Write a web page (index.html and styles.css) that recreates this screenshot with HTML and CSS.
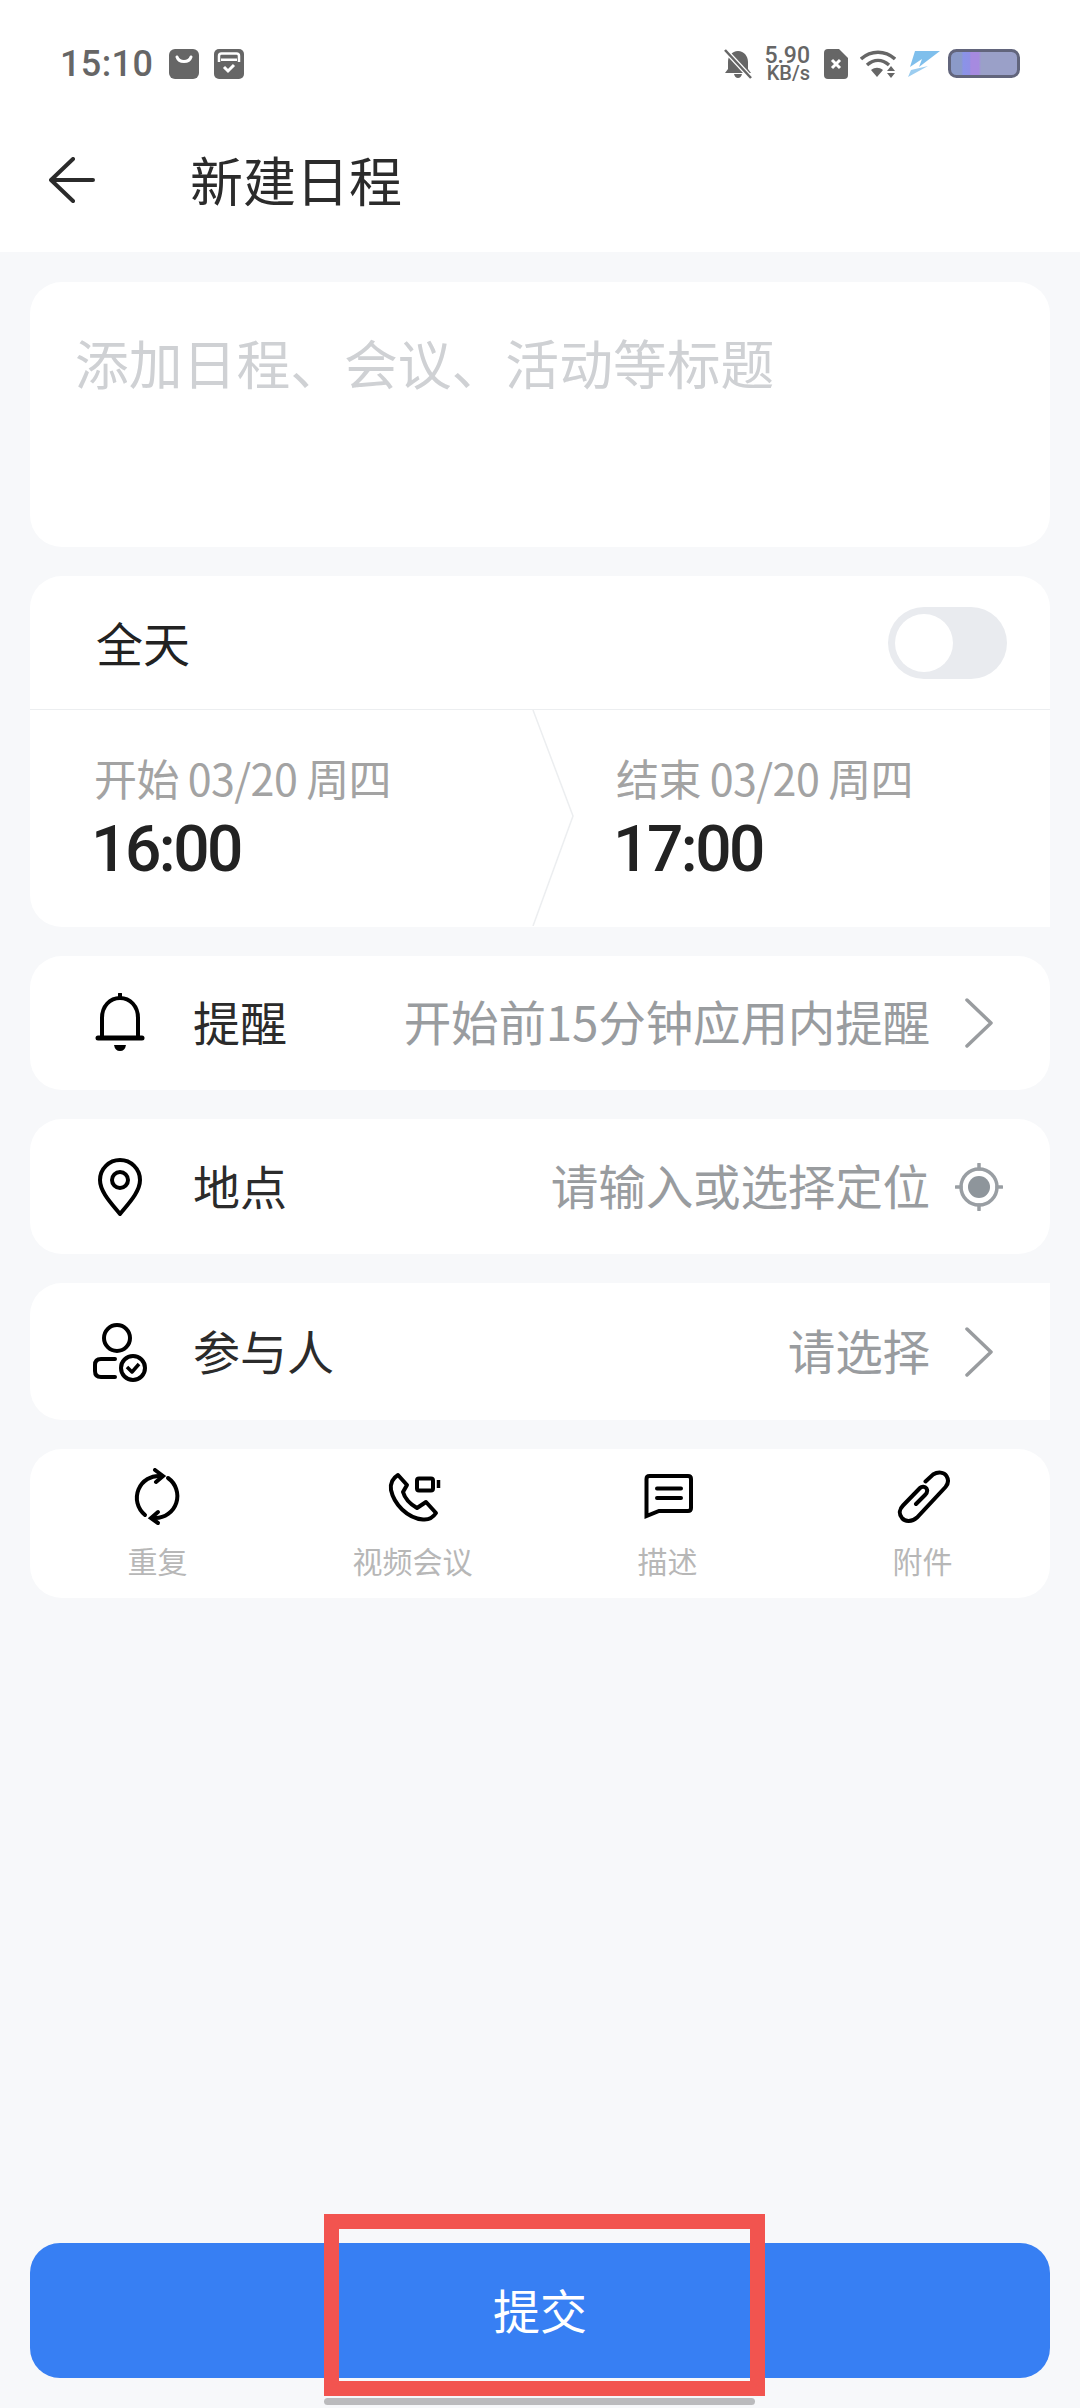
FILE: index.html
```html
<!DOCTYPE html>
<html lang="zh-CN">
<head>
<meta charset="utf-8">
<title>新建日程</title>
<link rel="stylesheet" href="styles.css">
</head>
<body>
<div class="page">
  <header class="top">
    <div class="status">
      <div class="status-left">
        <span class="clock">15:10</span>
        <svg class="si" width="30" height="30" viewBox="0 0 30 30"><rect width="30" height="30" rx="6" fill="#666"/><path d="M8 8c2 6 12 6 14 0" fill="none" stroke="#fff" stroke-width="3" stroke-linecap="round"/></svg>
        <svg class="si si-b" width="30" height="30" viewBox="0 0 30 30"><rect width="30" height="30" rx="5" fill="#666"/><path d="M5 13V7q0-2.500 2.500-2.500h15Q25 4.500 25 7v6" fill="none" stroke="#fff" stroke-width="2.500"/><rect x="7" y="9.500" width="16" height="2.500" fill="#fff"/><path d="M10 18l4 4 6-6" fill="none" stroke="#fff" stroke-width="3"/></svg>
      </div>
      <div class="status-right">
        <svg width="28" height="30" viewBox="0 0 28 30"><path d="M14 2c-6 0-10 5-10 11v7l-3 4h26l-3-4v-7c0-6-4-11-10-11zM10 25h8q-1 4-4 4t-4-4z" fill="#666"/><path d="M1 1l26 28" stroke="#fff" stroke-width="5"/><path d="M1 1l26 28" stroke="#666" stroke-width="2.500"/></svg>
        <div class="speed"><span class="speed-n">5.90</span><span class="speed-u">KB/s</span></div>
        <svg width="24" height="30" viewBox="0 0 24 30"><path d="M4 0h11l9 9v17q0 4-4 4H4q-4 0-4-4V4q0-4 4-4z" fill="#666"/><path d="M8 11l8 8M16 11l-8 8" stroke="#fff" stroke-width="3"/></svg>
        <svg width="36" height="30" viewBox="0 0 36 30"><g fill="none" stroke="#666" stroke-width="3.500"><path d="M1 10c10-9 24-9 34 0"/><path d="M7 16c7-6 15-6 22 0"/></g><path d="M11 21c4-3 8-3 12 0l-6 7z" fill="#666"/><path d="M31 17l-4 5h8zM31 29l-4-5h8z" fill="#666"/></svg>
        <svg class="bolt" width="32" height="28" viewBox="0 0 32 28"><path d="M7 1h25L11 17l3-8-12 8z" fill="#7fbfec"/><path d="M20 16L0 27l3-7z" fill="#9ccdf0"/></svg>
        <svg width="72" height="30" viewBox="0 0 72 30"><defs><linearGradient id="bat"><stop offset="0" stop-color="#8b9ac8"/><stop offset=".17" stop-color="#8b9ac8"/><stop offset=".2" stop-color="#8a93e8"/><stop offset=".29" stop-color="#8f90e6"/><stop offset=".31" stop-color="#a68ae0"/><stop offset=".42" stop-color="#a68ae0"/><stop offset=".46" stop-color="#9aa0c8"/><stop offset="1" stop-color="#9aa0c8"/></linearGradient></defs><rect x="1.500" y="1.500" width="69" height="26" rx="7" fill="url(#bat)" stroke="#62657c" stroke-width="3"/></svg>
      </div>
    </div>
    <div class="title-bar">
      <svg class="back" width="46" height="46" viewBox="0 0 46 46"><path d="M24 2L2 23l22 21M2 23h42" fill="none" stroke="#2b2b2b" stroke-width="4" stroke-linecap="round" stroke-linejoin="round"/></svg>
      <h1 class="title">新建日程</h1>
    </div>
  </header>

  <main class="content">
    <section class="card title-card"><p class="placeholder">添加日程、会议、活动等标题</p></section>

    <section class="card time-card">
      <div class="allday">
        <span class="allday-label">全天</span>
        <div class="toggle"><div class="knob"></div></div>
      </div>
      <div class="times">
        <div class="time-cell">
          <span class="time-date">开始 03/20 周四</span>
          <span class="time-value">16:00</span>
        </div>
        <div class="time-cell">
          <span class="time-date">结束 03/20 周四</span>
          <span class="time-value">17:00</span>
        </div>
        <svg class="arrow-line" width="44" height="216" viewBox="0 0 44 216"><path d="M1 0l40 106L1 216" fill="none" stroke="#eceef0" stroke-width="1.500"/></svg>
      </div>
    </section>

    <section class="card row row-a">
      <svg class="row-icon" width="56" height="60" viewBox="0 0 56 60"><path d="M10 44V25C10 13 18 5 28 5s18 8 18 20v19" fill="none" stroke="#000" stroke-width="4"/><path d="M28 1v4" stroke="#000" stroke-width="4" stroke-linecap="round"/><path d="M6 45h44" stroke="#000" stroke-width="5" stroke-linecap="round"/><path d="M22 52h12q-1 6-6 6t-6-6z" fill="#000"/></svg>
      <span class="row-label">提醒</span>
      <span class="row-value">开始前15分钟应用内提醒</span>
      <svg class="row-end" width="30" height="50" viewBox="0 0 30 50"><path d="M3 2l24 23L3 48" fill="none" stroke="#999c9f" stroke-width="3.500" stroke-linecap="round" stroke-linejoin="round"/></svg>
    </section>

    <section class="card row row-b">
      <svg class="row-icon" width="56" height="60" viewBox="0 0 56 60"><path d="M28 57C20 47 8 35 8 23a20 20 0 0 1 40 0c0 12-12 24-20 34z" fill="none" stroke="#000" stroke-width="4" stroke-linejoin="round"/><circle cx="28" cy="23" r="8" fill="none" stroke="#000" stroke-width="4"/></svg>
      <span class="row-label">地点</span>
      <span class="row-value">请输入或选择定位</span>
      <svg class="row-end row-target" width="48" height="48" viewBox="0 0 48 48"><circle cx="24" cy="24" r="18" fill="none" stroke="#999ea3" stroke-width="3.500"/><circle cx="24" cy="24" r="11" fill="#8e959b"/><path d="M24 1v5M24 42v5M1 24h5M42 24h5" stroke="#999ea3" stroke-width="3.500" stroke-linecap="round"/></svg>
    </section>

    <section class="card row row-c">
      <svg class="row-icon" width="56" height="60" viewBox="0 0 56 60"><circle cx="25" cy="16" r="13" fill="none" stroke="#000" stroke-width="4"/><path d="M23 37H9q-6 0-6 6v6q0 6 6 6h14" fill="none" stroke="#000" stroke-width="4" stroke-linecap="round"/><circle cx="41" cy="46" r="12" fill="none" stroke="#000" stroke-width="4"/><path d="M35 45l5 5 7-8" fill="none" stroke="#000" stroke-width="3.500" stroke-linejoin="round"/></svg>
      <span class="row-label">参与人</span>
      <span class="row-value">请选择</span>
      <svg class="row-end" width="30" height="50" viewBox="0 0 30 50"><path d="M3 2l24 23L3 48" fill="none" stroke="#999c9f" stroke-width="3.500" stroke-linecap="round" stroke-linejoin="round"/></svg>
    </section>

    <section class="card tools">
      <div class="tool">
        <svg width="56" height="58" viewBox="0 0 56 58"><g fill="none" stroke="#000" stroke-width="4" stroke-linecap="round"><path d="M15 47A22 22 0 0 1 31 8"/><path d="M38 10A22 22 0 0 1 25 50"/><path d="M25 2l8 6-7 6"/><path d="M28 44l-7 6 7 5"/></g></svg>
        <span class="tool-label">重复</span>
      </div>
      <div class="tool">
        <svg width="56" height="58" viewBox="0 0 56 58"><path d="M13 7L22 17L18 24C20 31 25 36 32 40L41 34L51 45C47 51 43 52 38 51.500C22 50 9 36 6 22C5 15 8 10 13 7Z" fill="none" stroke="#000" stroke-width="4" stroke-linejoin="round"/><rect x="32" y="10.500" width="16" height="12" rx="2" fill="none" stroke="#000" stroke-width="4"/><path d="M53.500 12v8" stroke="#000" stroke-width="3.500"/></svg>
        <span class="tool-label">视频会议</span>
      </div>
      <div class="tool">
        <svg width="56" height="58" viewBox="0 0 56 58"><path d="M6.500 48V11q0-3 3-3H48q3 0 3 3v29q0 3-3 3H19z" fill="none" stroke="#000" stroke-width="4"/><path d="M17 20.500h24M17 30h24" stroke="#000" stroke-width="4" stroke-linecap="round"/></svg>
        <span class="tool-label">描述</span>
      </div>
      <div class="tool">
        <svg width="56" height="58" viewBox="0 0 56 58"><path d="M30.500 13.500L38 6.500C43 3.500 49 4 51.500 8C54 12 53 16 50.500 19L22 49.500C17 54 10 54 7 50C3.500 46 4.500 41 8 37.500L25 20C27 18 30 18.500 31.500 20.500C33 23 32 25 30 27L21 36" fill="none" stroke="#000" stroke-width="4" stroke-linecap="round"/></svg>
        <span class="tool-label">附件</span>
      </div>
    </section>

    <button class="submit" type="button">提交</button>
  </main>

  <div class="highlight"></div>
  <div class="home-bar"></div>
</div>
</body>
</html>
```
FILE: styles.css
```css
* { box-sizing: border-box; }
html, body { margin: 0; padding: 0; }
body {
  width: 1080px;
  height: 2408px;
  overflow: hidden;
  font-family: "Noto Sans CJK SC", Roboto, sans-serif;
  color: #2b2b2b;
}
.page {
  position: relative;
  width: 1080px;
  height: 2408px;
  background: #f7f8fa;
  display: flex;
  flex-direction: column;
}
.top { background: #fff; height: 252px; flex: none; }
.status {
  height: 128px;
  padding: 0 60px;
  display: flex;
  align-items: center;
  justify-content: space-between;
}
.status-left { display: flex; align-items: center; }
.clock {
  font-family: Roboto, sans-serif;
  font-weight: 500;
  font-size: 36px;
  color: #666;
  letter-spacing: .4px;
  width: 109px;
}
.si-b { margin-left: 15px; }
.status-right { display: flex; align-items: center; gap: 12px; }
.speed {
  display: flex;
  flex-direction: column;
  align-items: flex-end;
  font-family: Roboto, sans-serif;
  font-weight: 500;
  color: #666;
  width: 46px;
  margin-right: 2px;
}
.speed-n { font-size: 23px; line-height: 19px; }
.speed-u { font-size: 20px; line-height: 17px; }
.bolt { margin-right: -4px; }
.title-bar {
  height: 104px;
  padding-left: 49px;
  display: flex;
  align-items: center;
}
.title {
  margin: 0 0 0 95px;
  font-size: 53px;
  font-weight: 400;
  line-height: 1.2;
  color: #2b2b2b;
}
.content {
  flex: 1;
  padding: 30px;
  display: flex;
  flex-direction: column;
  gap: 29px;
}
.card { background: #fff; border-radius: 32px; flex: none; }
.title-card { height: 265px; padding: 47px 45px 0; }
.placeholder {
  margin: 0;
  font-size: 53.800px;
  line-height: 66px;
  color: #cfd1d4;
}
.time-card { height: 351px; border-bottom-right-radius: 0; overflow: hidden; }
.allday {
  height: 134px;
  padding: 0 43px 0 66px;
  display: flex;
  align-items: center;
  justify-content: space-between;
  border-bottom: 1px solid #eceef0;
}
.allday-label { font-size: 47px; color: #222; padding-bottom: 3px; }
.toggle {
  width: 119px;
  height: 72px;
  border-radius: 36px;
  background: #e9ebef;
  padding: 7px;
}
.knob { width: 58px; height: 58px; border-radius: 50%; background: #fff; }
.times { position: relative; display: flex; height: 216px; }
.time-cell {
  width: 50%;
  display: flex;
  flex-direction: column;
  padding: 39px 0 0 64px;
}
.time-cell + .time-cell { padding-left: 76px; }
.time-date {
  font-size: 43px;
  line-height: 56px;
  color: #a3a3a3;
  letter-spacing: -.6px;
  white-space: nowrap;
}
.time-value {
  margin: 9px 0 0 -3px;
  font-family: Roboto, sans-serif;
  font-weight: 500;
  font-size: 64px;
  line-height: 72px;
  letter-spacing: -2.500px;
  color: #222;
}
.arrow-line { position: absolute; left: 502px; top: 0; }
.row {
  display: flex;
  align-items: center;
  padding: 0 56px 0 62px;
}
.row-a { height: 134px; }
.row-b { height: 135px; }
.row-c { height: 137px; border-top-right-radius: 0; border-bottom-right-radius: 0; }
.row-icon { flex: none; margin-right: 45px; }
.row-label { font-size: 47px; color: #2b2b2b; padding-bottom: 5px; }
.row-value {
  margin-left: auto;
  margin-right: 34px;
  font-size: 47.600px;
  color: #999c9f;
  letter-spacing: -.2px;
  padding-bottom: 5px;
}
.row-end { flex: none; }
.row-target { margin-left: -9px; margin-right: -9px; }
.tools {
  height: 149px;
  display: grid;
  grid-template-columns: repeat(4, 1fr);
  padding-top: 19px;
}
.tool { display: flex; flex-direction: column; align-items: center; gap: 14px; }
.tool-label { font-size: 30px; line-height: 40px; color: #b7b7b7; }
.submit {
  margin-top: auto;
  height: 135px;
  flex: none;
  width: 100%;
  border: 0;
  border-radius: 30px;
  background: #377ff3;
  color: #fff;
  font-family: "Noto Sans CJK SC", sans-serif;
  font-size: 47px;
  padding: 0 0 4px;
}
.highlight {
  position: absolute;
  left: 324px;
  top: 2214px;
  width: 441px;
  height: 182px;
  border: 15px solid #f2544f;
}
.home-bar {
  position: absolute;
  left: 324px;
  top: 2398px;
  width: 431px;
  height: 7px;
  border-radius: 4px;
  background: #bbbbbd;
}
```
